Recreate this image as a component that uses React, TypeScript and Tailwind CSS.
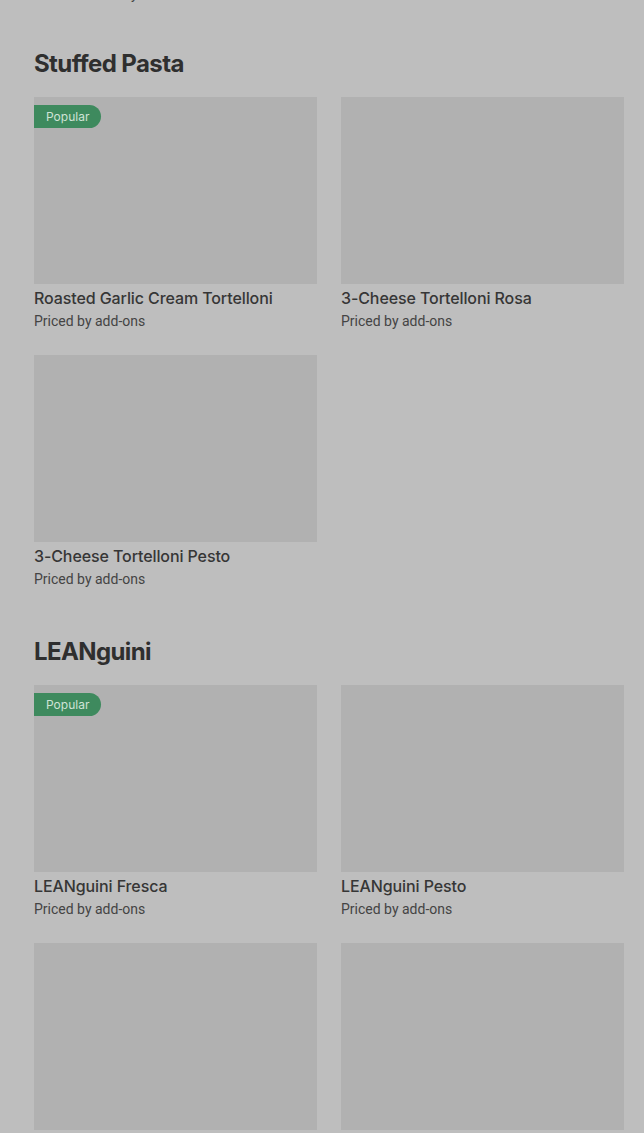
import React from 'react';

type Item = { name: string; popular?: boolean };

const sections: { title: string; items: Item[] }[] = [
  {
    title: 'Stuffed Pasta',
    items: [
      { name: 'Roasted Garlic Cream Tortelloni', popular: true },
      { name: '3-Cheese Tortelloni Rosa' },
      { name: '3-Cheese Tortelloni Pesto' },
    ],
  },
  {
    title: 'LEANguini',
    items: [
      { name: 'LEANguini Fresca', popular: true },
      { name: 'LEANguini Pesto' },
      { name: 'LEANguini Marinara' },
      { name: 'LEANguini Alfredo' },
    ],
  },
];

function Card({ item }: { item: Item }) {
  return (
    <div className="flex flex-col">
      <div className="relative h-[187px] bg-[#b1b1b1]">
        {item.popular && (
          <span className="absolute left-0 top-2 flex h-[23px] w-[67px] items-center rounded-r-full bg-[#3e8a5e] pl-3 text-[12px] text-[#cfe3d6]">
            Popular
          </span>
        )}
      </div>
      <div className="mt-1 truncate text-[16px] font-medium leading-5 tracking-[-0.1px] text-[#363636]">{item.name}</div>
      <div className="mt-[3px] font-['Roboto'] text-[14px] leading-5 text-[#444]">Priced by add-ons</div>
    </div>
  );
}

export default function App() {
  return (
    <div
      className="min-h-screen overflow-hidden bg-[#bebebe] pl-[34px] pr-5"
      style={{ fontFamily: 'Inter, "Noto Sans", sans-serif' }}
    >
      <div className="-mt-4 h-5 pl-[46px] font-['Roboto'] text-[14px] leading-5 text-[#444]">Priced by add-ons</div>
      {sections.map((s, i) => (
        <section key={s.title} className={i === 0 ? 'mt-[44px]' : 'mt-[47px]'}>
          <h2 className="mb-[17px] text-[24px] font-bold leading-8 tracking-[-0.6px] text-[#2f2f2f]">{s.title}</h2>
          <div className="grid grid-cols-2 gap-x-6 gap-y-6">
            {s.items.map((it) => (
              <Card key={it.name} item={it} />
            ))}
          </div>
        </section>
      ))}
    </div>
  );
}
